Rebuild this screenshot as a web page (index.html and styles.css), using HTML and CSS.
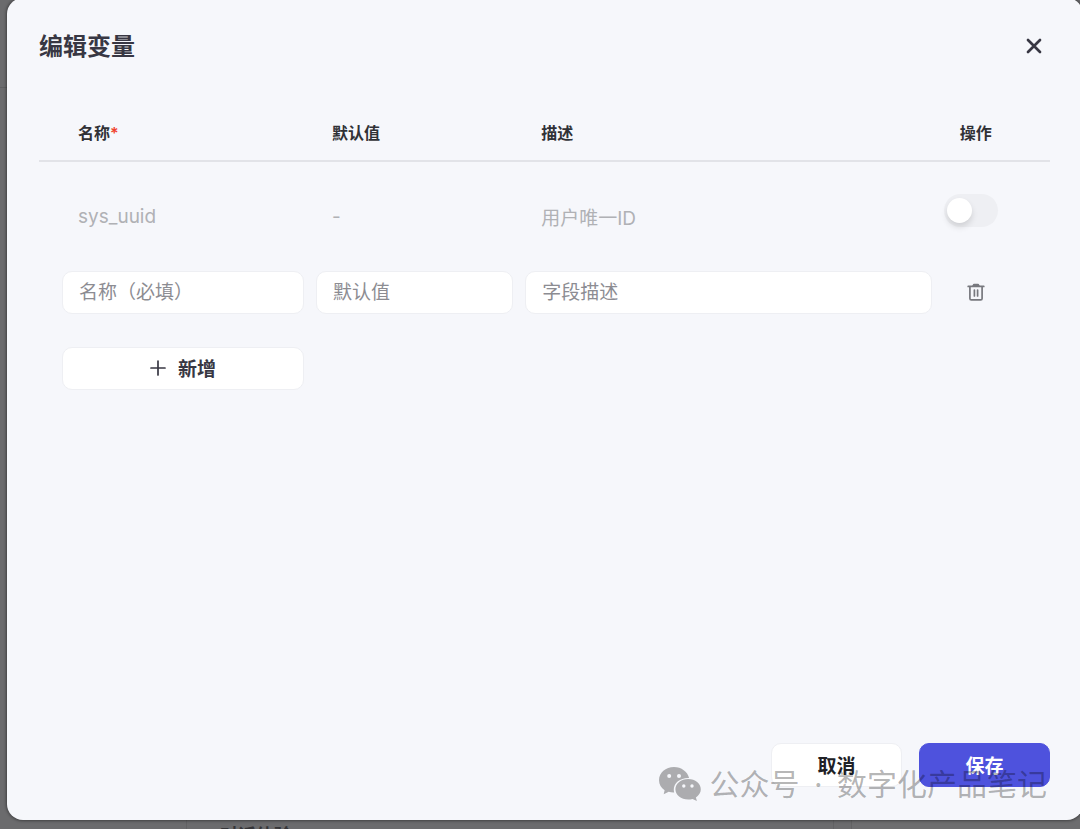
FILE: index.html
```html
<!DOCTYPE html>
<html lang="zh-CN">
<head>
<meta charset="utf-8">
<meta name="viewport" content="width=device-width, initial-scale=1">
<title>编辑变量</title>
<link rel="stylesheet" href="styles.css">
</head>
<body>
<div class="backdrop" aria-hidden="true">
  <div class="backdrop-side"></div>
  <div class="backdrop-panel">对话体验</div>
  <div class="backdrop-gutter"></div>
  <div class="backdrop-card"></div>
</div>
<main class="modal" role="dialog" aria-labelledby="dialog-title">
  <header class="modal-header">
    <h1 class="modal-title" id="dialog-title">编辑变量</h1>
    <button class="icon-button" type="button" aria-label="关闭">
      <svg width="16" height="16" viewBox="0 0 16 16" fill="none" stroke="currentColor" stroke-width="2.7" stroke-linecap="round"><path d="M2 2l12 12M14 2L2 14"/></svg>
    </button>
  </header>
  <div class="modal-body">
    <table class="variables">
      <colgroup><col class="col-name"><col class="col-default"><col class="col-desc"><col class="col-action"></colgroup>
      <thead>
        <tr><th>名称<span class="required">*</span></th><th>默认值</th><th>描述</th><th class="action">操作</th></tr>
      </thead>
      <tbody>
        <tr class="spacer" aria-hidden="true"><td colspan="4"></td></tr>
        <tr class="readonly"><td>sys_uuid</td><td>-</td><td>用户唯一ID</td><td class="action action-switch"><input class="switch" type="checkbox" role="switch" aria-label="启用 sys_uuid"></td></tr>
        <tr class="editable">
          <td><input class="field" type="text" placeholder="名称（必填）" aria-label="名称"></td>
          <td><input class="field" type="text" placeholder="默认值" aria-label="默认值"></td>
          <td><input class="field" type="text" placeholder="字段描述" aria-label="描述"></td>
          <td class="action">
            <button class="icon-button delete" type="button" aria-label="删除">
              <svg width="18" height="18" viewBox="0 0 18 18" fill="none" stroke="currentColor" stroke-width="1.7" stroke-linecap="round" stroke-linejoin="round"><path d="M1.200 3.400h15.600M2.900 3.400v12.100c0 .9.5 1.400 1.400 1.400h9.400c.9 0 1.400-.5 1.400-1.400V3.400M7.400 7v6M10.600 7v6"/><path d="M6 3.200l1-1.700h4l1 1.700z" fill="currentColor"/></svg>
            </button>
          </td>
        </tr>
        <tr class="editable">
          <td><button class="button add" type="button"><svg width="16" height="16" viewBox="0 0 16 16" fill="none" stroke="currentColor" stroke-width="1.7" stroke-linecap="round"><path d="M8 1v14M1 8h14"/></svg><span>新增</span></button></td>
          <td colspan="3"></td>
        </tr>
      </tbody>
    </table>
  </div>
  <footer class="modal-footer">
    <button class="button cancel" type="button"><span>取消</span></button>
    <button class="button save" type="button"><span>保存</span></button>
  </footer>
</main>
<div class="watermark">
  <svg width="42" height="34" viewBox="0 0 42 34" aria-hidden="true">
    <g fill="currentColor" fill-rule="evenodd">
      <path d="M15 0C6.700 0 0 5.900 0 13.200c0 4.200 2.200 7.700 5.600 10L4.700 27.300l5-2.600c1.700.5 3.600.8 5.500.7a10.500 10.500 0 0 1-.4-3C14.800 16.200 21 11 29.200 11h.9C28.500 4.700 22.400 0 15 0zM10.200 7a2 2 0 1 1 0 4 2 2 0 0 1 0-4zM20 7a2 2 0 1 1 0 4 2 2 0 0 1 0-4z"/>
      <path d="M29.200 12C22 12 16.400 16.600 16.400 22.300S22 32.600 29.200 32.600c1.500 0 3-.2 4.300-.6l4.400 2-1-3.600c3-1.900 4.900-4.800 4.900-8.100C41.800 16.600 36.300 12 29.200 12zM24.800 17.300a1.700 1.700 0 1 1 0 3.400 1.700 1.700 0 0 1 0-3.400zM33 17.300a1.700 1.700 0 1 1 0 3.400 1.700 1.700 0 0 1 0-3.400z"/>
    </g>
  </svg>
  <span>公众号 <span class="dot">·</span> 数字化产品笔记</span>
</div>
</body>
</html>
```

FILE: styles.css
```css
* { box-sizing: border-box; }

body {
  position: relative;
  min-height: 100vh;
  margin: 0;
  overflow: hidden;
  background: #6b6b6d;
  color: #383743;
  font-family: Inter, "Noto Sans CJK SC", sans-serif;
  font-size: 19px;
}

button, input { font: inherit; }

/* Dimmed page underneath the dialog */
.backdrop {
  position: absolute;
  inset: 0;
  display: grid;
  grid-template-columns: 187px 1fr 18px 228px;
  overflow: hidden;
}
.backdrop-side { background: linear-gradient(#5f5f61, #5f5f61) 0 87px / 100% 1px no-repeat; border-right: 1px solid #626264; }
.backdrop-panel {
  display: flex;
  align-items: flex-end;
  margin-bottom: -19px;
  padding-left: 33px;
  border-right: 1px solid #626264;
  color: #353538;
  font-size: 18px;
  font-weight: 700;
  line-height: 24px;
}
.backdrop-gutter { border-right: 1px solid #626264; }
.backdrop-card { background: #6d6d6f; }

.modal {
  position: absolute;
  inset: -2px -3px 9px 7px;
  display: flex;
  flex-direction: column;
  padding: 28px 33px 33px 32px;
  border-radius: 16px;
  background: #f6f7fb;
  box-shadow: 0 0 3px 1px rgba(0, 0, 0, .4);
}

.modal-header {
  display: flex;
  align-items: center;
  justify-content: space-between;
  height: 40px;
}
.modal-title { margin: 0; padding-top: 2px; font-size: 24px; font-weight: 600; line-height: 36px; }

.icon-button {
  display: inline-flex;
  align-items: center;
  justify-content: center;
  width: 32px;
  height: 32px;
  padding: 0;
  border: 0;
  background: none;
  color: #383743;
}
.delete { color: #77787e; }

.modal-body { flex: 1; padding-top: 40px; }

.variables {
  width: 100%;
  table-layout: fixed;
  border-collapse: separate;
  border-spacing: 0;
}
.col-name { width: 26.8%; }
.col-default { width: 20.7%; }
.col-desc { width: 41.4%; }

.variables th {
  height: 56px;
  padding: 0 0 2px 22px;
  border-bottom: 2px solid #e2e3e8;
  color: #303136;
  font-size: 16px;
  font-weight: 600;
  text-align: left;
}
.variables td { height: 76px; padding: 0 6px; }
.variables .readonly td { padding-left: 22px; color: #b0b1b5; }
.variables th:first-child,
.variables .readonly td:first-child { padding-left: 39px; }
.variables .editable td:first-child { padding-left: 23px; }
.variables .spacer td { height: 16px; padding: 0; }
.variables th.action { padding: 0 36px 2px 0; text-align: center; }
.variables td.action { padding: 0 36px 0 0; text-align: center; }
.variables td.action-switch { padding: 0 45px 11px 0; }
.required { color: #f0422e; }

.field {
  display: block;
  width: 100%;
  height: 43px;
  padding: 1px 16px 0;
  border: 1px solid #eeeff3;
  border-radius: 10px;
  outline: 0;
  background: #fff;
  color: #383743;
}
.field::placeholder { color: #8c8c92; opacity: 1; }

.switch {
  display: inline-grid;
  align-items: center;
  width: 54px;
  height: 33px;
  margin: 0;
  padding: 0 3px;
  border-radius: 17px;
  background: #eeeff3;
  appearance: none;
  vertical-align: middle;
}
.switch::before {
  content: "";
  width: 25px;
  height: 25px;
  border-radius: 50%;
  background: #fff;
  box-shadow: 0 4px 6px rgba(0, 0, 0, .13);
}
.switch:checked { background: #4e52dd; }
.switch:checked::before { justify-self: end; }

.button {
  display: flex;
  align-items: center;
  justify-content: center;
  width: 131px;
  height: 44px;
  padding: 0;
  border: 1px solid #eeeff3;
  border-radius: 10px;
  background: #fff;
  color: #202126;
  font-size: 19px;
  font-weight: 600;
}
.button span { padding-bottom: 2px; }
.add { gap: 12px; width: 100%; height: 43px; color: #383743; }
.save { border-color: #4e52dd; background: #4e52dd; color: #fff; }

.modal-footer { display: flex; justify-content: flex-end; gap: 17px; }

.watermark {
  position: absolute;
  right: 33px;
  bottom: 23px;
  display: flex;
  align-items: center;
  gap: 8px;
  color: rgba(0, 0, 0, .3);
  font-family: Inter, "Noto Sans CJK SC", sans-serif;
  font-size: 30px;
  line-height: 44px;
  white-space: nowrap;
  pointer-events: none;
}
.dot { margin: 0 6px; }
```
